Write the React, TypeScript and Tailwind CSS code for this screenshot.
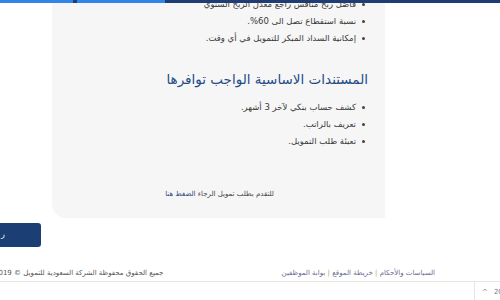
const font = { fontFamily: '"DejaVu Sans", "Noto Sans", sans-serif' };

function Bullet({ children }: { children: React.ReactNode }) {
  return (
    <li className="flex items-center gap-[6px] h-[17px]">
      <span className="w-[3px] h-[3px] rounded-full bg-[#444] shrink-0" />
      <span className="text-[8.5px] text-[#3a3a3a] whitespace-nowrap">{children}</span>
    </li>
  );
}

export default function App() {
  return (
    <div dir="rtl" className="relative w-[500px] h-[300px] overflow-hidden bg-white" style={font}>
      {/* top nav strip */}
      <div dir="ltr" className="flex h-[3px] bg-[#1d3d74]">
        <div className="w-[73px] bg-[#2f86e6]" />
        <div className="w-[4px]" />
        <div className="w-[88px] bg-[#2f86e6]" />
      </div>

      <div dir="ltr" className="flex">
        <div className="w-[52px] shrink-0" />
        <div dir="rtl" className="w-[333px] h-[215px] bg-[#f6f6f6] rounded-bl-[14px] pr-[20px] flex flex-col">
          <ul className="mt-[-7px] flex flex-col">
            <Bullet>قاصَل ربح منافس راجع معدل الربح السنوي</Bullet>
            <Bullet>نسبة استقطاع تصل الى 60%.</Bullet>
            <Bullet>إمكانية السداد المبكر للتمويل في أي وقت.</Bullet>
          </ul>
          <h2 className="mt-[22px] mr-[-3px] text-[13.5px] leading-[20px] text-[#1f4b86] whitespace-nowrap">
            المستندات الاساسية الواجب توافرها
          </h2>
          <ul className="mt-[10px] flex flex-col">
            <Bullet>كشف حساب بنكي لآخر 3 أشهر.</Bullet>
            <Bullet>تعريف بالراتب.</Bullet>
            <Bullet>تعبئة طلب التمويل.</Bullet>
          </ul>
          <p className="mt-[39px] mr-[91px] text-[7px] text-[#444] whitespace-nowrap">
            للتقدم بطلب تمويل الرجاء <span className="text-[#1f3f78]">الضغط هنا</span>
          </p>
        </div>
      </div>

      {/* action button */}
      <div dir="ltr" className="mt-[5px] flex">
        <div className="ml-[-60px] w-[101px] h-[24px] rounded-[3px] bg-[#1b3f74] flex items-center pl-[61px]">
          <span className="text-[8px] text-white">ر</span>
        </div>
      </div>

      {/* footer links */}
      <div dir="ltr" className="mt-[20px] flex items-center h-[12px]">
        <p dir="rtl" className="ml-[-6px] text-[7px] text-[#555] whitespace-nowrap">
          جميع الحقوق محفوظة الشركة السعودية للتمويل © 2019
        </p>
        <div className="flex-1" />
        <p dir="rtl" className="mr-[65px] text-[7px] text-[#6a6a90] whitespace-nowrap">
          السياسات والأحكام <span className="text-[#c9a23a]">|</span> خريطة الموقع{" "}
          <span className="text-[#c9a23a]">|</span> بوابة الموظفين
        </p>
      </div>
      <div className="mt-[2px] border-t border-[#e6e6e6]" />
      <div dir="ltr" className="flex justify-end h-[20px]">
        <div className="w-[26px] border-l border-[#e6e6e6] flex items-center gap-[6px] pl-[7px] text-[7px] text-[#777]">
          <span>^</span>
          <span>20</span>
        </div>
      </div>
    </div>
  );
}
